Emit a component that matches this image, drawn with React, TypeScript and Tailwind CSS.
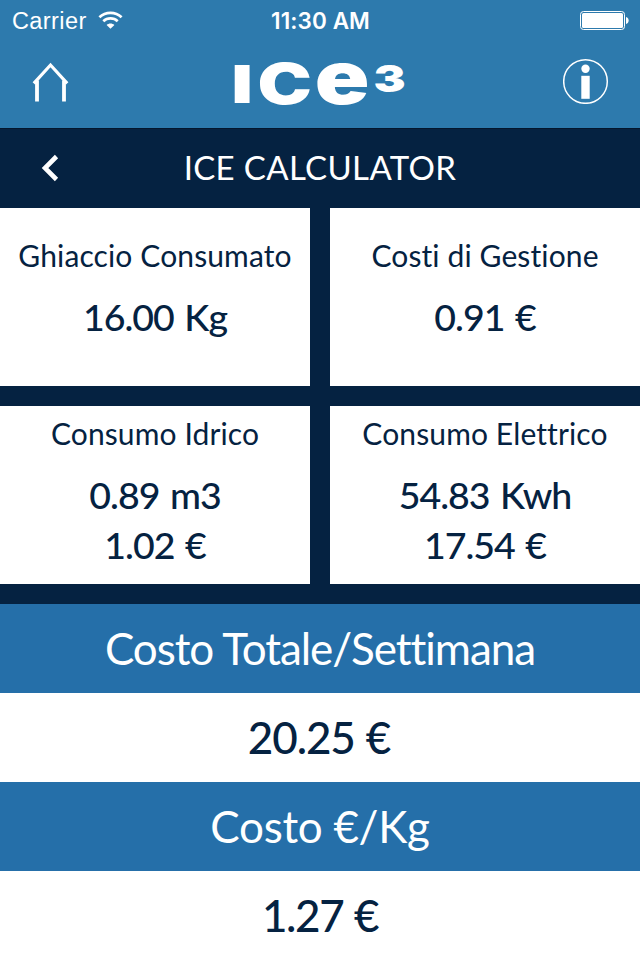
import React from "react";

const StatusBar = () => {
    return (
        <div className="flex h-10 items-center justify-between pl-3 pr-[11px] font-['Liberation_Sans',Arial,sans-serif] text-white">
            <div className="flex w-[200px] items-center gap-[11px]">
                <span className="pt-[3px] text-[23.5px] leading-none tracking-[0.4px]">
                    Carrier
                </span>
                <svg width="25" height="19" viewBox="0 0 25 19" fill="none">
                    <path
                        d="M1.4 6.2C7.6 0.3 17.4 0.3 23.6 6.2"
                        stroke="white"
                        strokeWidth="2.7"
                    />
                    <path
                        d="M5.3 10.2C9.3 6.5 15.7 6.5 19.7 10.2"
                        stroke="white"
                        strokeWidth="2.7"
                    />
                    <path
                        d="M8.6 13.9C10.8 11.9 14.2 11.9 16.4 13.9L12.5 17.8Z"
                        fill="white"
                    />
                </svg>
            </div>
            <span className="pt-0.5 font-['Inter',sans-serif] text-[22.5px] leading-none font-semibold tracking-[0.1px]">
                11:30 AM
            </span>
            <div className="flex w-[200px] justify-end">
                <svg width="49" height="19" viewBox="0 0 49 19" fill="none">
                    <rect
                        x="0.5"
                        y="0.5"
                        width="44"
                        height="18"
                        rx="3"
                        stroke="white"
                    />
                    <rect
                        x="2"
                        y="2"
                        width="41"
                        height="15"
                        rx="1.5"
                        fill="white"
                    />
                    <path d="M46 6C49.5 6.5 49.5 12.5 46 13Z" fill="white" />
                </svg>
            </div>
        </div>
    );
};

const Logo = () => {
    return (
        <svg
            width="184"
            height="104"
            viewBox="-4 -32 184 104"
            fill="white"
            className="-mt-8 font-['Inter',sans-serif] font-black"
        >
            <text transform="translate(-1.8 45) scale(1.44 1)" fontSize="52">
                I
            </text>
            <text transform="translate(24.5 46) scale(1.3 1)" fontSize="56">
                C
            </text>
            <text transform="translate(81.8 46) scale(1.22 1)" fontSize="74">
                e
            </text>
            <text transform="translate(140.5 33.5) scale(1.3 1)" fontSize="37">
                3
            </text>
        </svg>
    );
};

const NavBar = () => {
    return (
        <div className="flex h-[88px] items-start justify-between pl-8 pr-8 pt-[18px]">
            <svg
                width="46"
                height="46"
                viewBox="0 0 46 46"
                fill="none"
                stroke="white"
            >
                <path d="M1.8 25.3L18.5 7L35.2 25.3" strokeWidth="3.2" />
                <path d="M5 22.5V43.5M32 22.5V43.5" strokeWidth="3.8" />
            </svg>
            <Logo />
            <svg
                className="-mr-px"
                width="46"
                height="46"
                viewBox="0 0 46 46"
                fill="white"
            >
                <circle
                    cx="22.5"
                    cy="23.5"
                    r="21.8"
                    fill="none"
                    stroke="white"
                    strokeWidth="1.5"
                />
                <circle cx="22.5" cy="10.7" r="4.2" />
                <rect x="18.3" y="17.8" width="8.4" height="23" />
            </svg>
        </div>
    );
};

type CardProps = {
    title: string;
    className: string;
    children: React.ReactNode;
};

const Card = ({ title, className, children }: CardProps) => {
    return (
        <div
            className={`flex h-[178px] flex-col items-center bg-white ${className}`}
        >
            <h2 className="text-[30px] leading-9 tracking-[0.12px] whitespace-nowrap">
                {title}
            </h2>
            <div className="mt-[19px] text-center text-[37.5px] leading-[50px] font-medium tracking-[-1px] [word-spacing:2px]">
                {children}
            </div>
        </div>
    );
};

const App = () => {
    return (
        <div className="h-[960px] w-[640px] overflow-hidden bg-[#052241] font-['Gill_Sans','Lato',sans-serif] text-[#052241]">
            <header className="h-32 bg-[#2d7aad]">
                <StatusBar />
                <NavBar />
            </header>
            {/* title bar */}
            <div className="flex h-20 items-center border-t border-[#04172e] text-white">
                <svg
                    className="mb-0.5 ml-10"
                    width="20"
                    height="28"
                    viewBox="0 0 20 28"
                    fill="none"
                >
                    <path
                        d="M16.5 2.5L5 14L16.5 25.5"
                        stroke="white"
                        strokeWidth="4.6"
                    />
                </svg>
                <h1 className="mr-[60px] flex-1 pb-[3px] text-center text-[33px] leading-none tracking-[0.35px]">
                    ICE CALCULATOR
                </h1>
            </div>
            {/* consumption and costs */}
            <div className="grid grid-cols-2 gap-5">
                <Card title="Ghiaccio Consumato" className="pt-[29px]">
                    <p>16.00 Kg</p>
                </Card>
                <Card title="Costi di Gestione" className="pt-[29px]">
                    <p>0.91 €</p>
                </Card>
                <Card title="Consumo Idrico" className="pt-[9px]">
                    <p>0.89 m3</p>
                    <p>1.02 €</p>
                </Card>
                <Card title="Consumo Elettrico" className="pt-[9px]">
                    <p>54.83 Kwh</p>
                    <p>17.54 €</p>
                </Card>
            </div>
            {/* totals */}
            <div className="mt-5 text-center text-[44px] leading-[89px]">
                <h2 className="bg-[#256fa9] tracking-[-1.05px] text-white">
                    Costo Totale/Settimana
                </h2>
                <p className="bg-white pr-0.5 font-medium tracking-[-1.1px] [word-spacing:1px]">
                    20.25 €
                </p>
                <h2 className="bg-[#256fa9] tracking-[-0.3px] text-white">
                    Costo €/Kg
                </h2>
                <p className="bg-white font-medium tracking-[-1.4px] [word-spacing:1px]">
                    1.27 €
                </p>
            </div>
        </div>
    );
};

export default App;
